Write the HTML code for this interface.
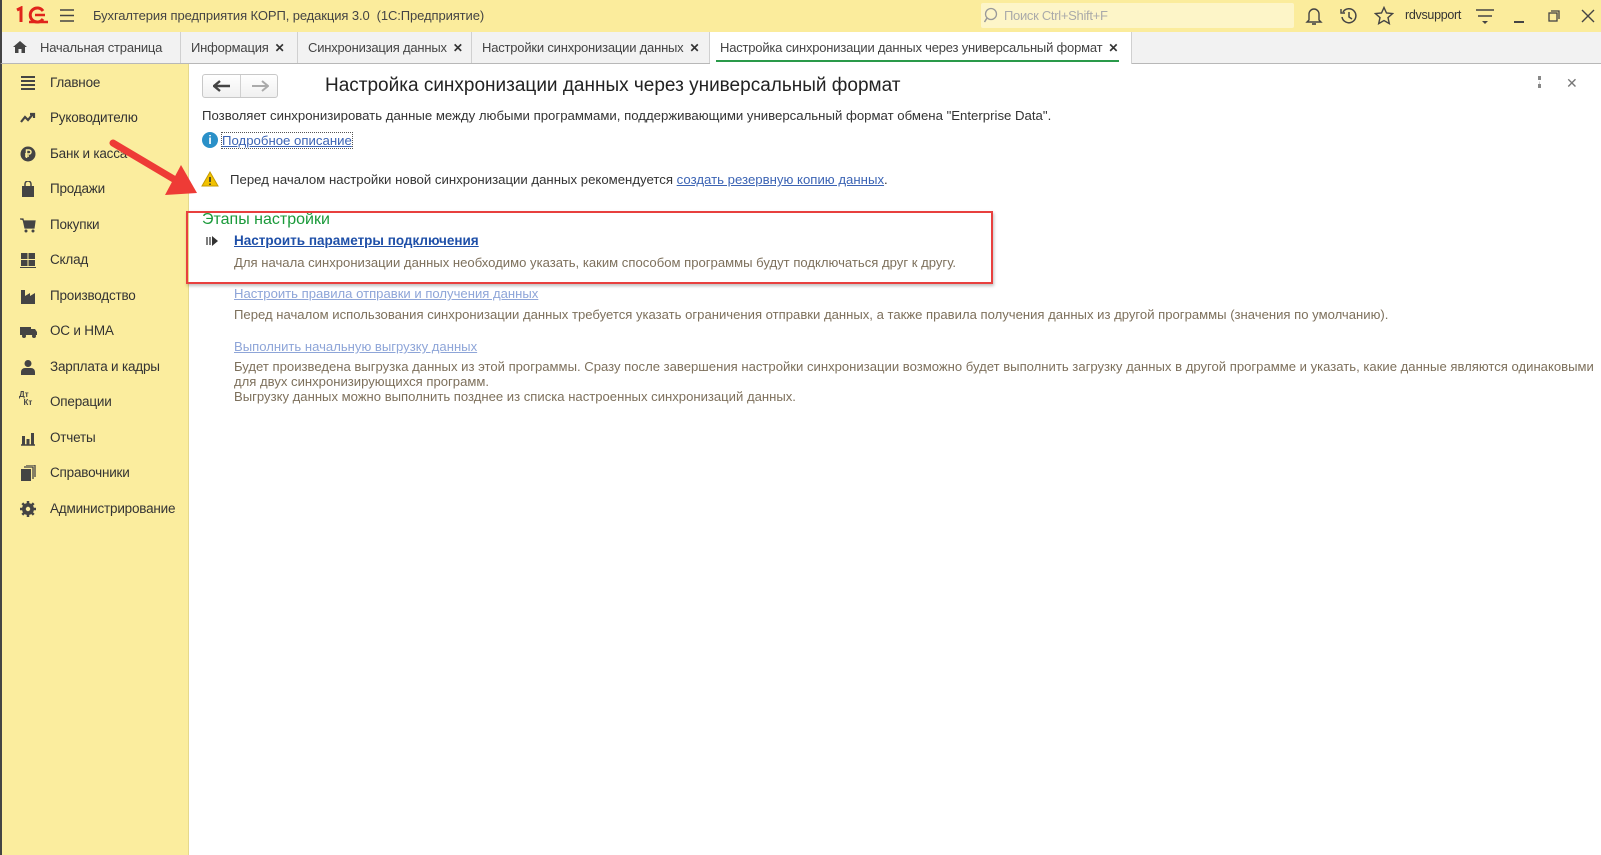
<!DOCTYPE html>
<html><head><meta charset="utf-8"><style>
*{margin:0;padding:0;box-sizing:border-box}
body{width:1601px;height:855px;overflow:hidden;background:#fff;font-family:"Liberation Sans",Arial,sans-serif;font-size:13px;color:#333;position:relative}
.abs{position:absolute;white-space:nowrap}
#top{position:absolute;left:0;top:0;width:1601px;height:32px;background:#fbec9c;border-left:2px solid #444}
#tabs{position:absolute;left:0;top:32px;width:1601px;height:32px;background:#f2f2f2;border-bottom:1px solid #b8b8b8;border-left:2px solid #444}
.tab{position:absolute;top:0;height:31px;line-height:31px;font-size:13px;color:#444;border-right:1px solid #d0d0d0;padding-left:10px;white-space:nowrap;overflow:hidden;letter-spacing:-0.2px}
.tab .x{font-size:12px;color:#333;margin-left:6px;font-weight:bold}
#side{position:absolute;left:0;top:64px;width:189px;height:791px;background:#fbed9e;border-right:1px solid #e6d98c;border-left:2px solid #444}
.si{position:absolute;left:48px;font-size:13.5px;color:#333;white-space:nowrap;letter-spacing:-0.2px}
.ic{position:absolute;left:18px;width:16px;height:16px}
.desc{color:#7d705c;font-size:13.1px}
.lnk{color:#3c64b4;text-decoration:underline}
.flnk{color:#8ea5d8;text-decoration:underline}
</style></head><body>
<div id="top">
 <svg class="abs" style="left:13px;top:6px" width="34" height="18" viewBox="0 0 34 18"><path d="M2 4 L6 2 V16" stroke="#e0241b" stroke-width="3" fill="none"/><path d="M28 5 A7 7 0 1 0 28 13" stroke="#e0241b" stroke-width="3" fill="none"/><path d="M14 16 H33" stroke="#e0241b" stroke-width="2.5"/><path d="M20 9 H30" stroke="#e0241b" stroke-width="2.5"/></svg>
 <svg class="abs" style="left:57px;top:8px" width="16" height="15"><path d="M1 2H15M1 7.5H15M1 13H15" stroke="#444" stroke-width="1.5"/></svg>
 <div class="abs" style="left:91px;top:8px;font-size:13px;color:#444;letter-spacing:-0.1px">Бухгалтерия предприятия КОРП, редакция 3.0 &nbsp;(1С:Предприятие)</div>
 <div class="abs" style="left:979px;top:3px;width:313px;height:25px;background:#fdf5c8;border-radius:2px"></div>
 <svg class="abs" style="left:982px;top:7px" width="16" height="17"><circle cx="7" cy="7" r="5.5" stroke="#999" stroke-width="1.3" fill="none"/><path d="M3 11 L0.5 15" stroke="#999" stroke-width="1.5"/></svg>
 <div class="abs" style="left:1002px;top:8px;font-size:13px;color:#aaa;letter-spacing:-0.3px">Поиск Ctrl+Shift+F</div>
 <svg class="abs" style="left:1303px;top:6px" width="18" height="20" viewBox="0 0 18 20"><path d="M4 14V8a5 5 0 0 1 10 0v6l2 2H2z" stroke="#444" stroke-width="1.4" fill="none"/><path d="M7 18h4" stroke="#444" stroke-width="1.6"/></svg>
 <svg class="abs" style="left:1337px;top:6px" width="20" height="20" viewBox="0 0 20 20"><path d="M4 6A7 7 0 1 1 3 11" stroke="#444" stroke-width="1.5" fill="none"/><path d="M2 3v4h4" stroke="#444" stroke-width="1.4" fill="none"/><path d="M10 6v5l3 2" stroke="#444" stroke-width="1.5" fill="none"/></svg>
 <svg class="abs" style="left:1372px;top:6px" width="20" height="19" viewBox="0 0 20 19"><path d="M10 1.5l2.5 5.5 6 .6-4.5 4 1.3 6L10 14.5 4.7 17.6 6 11.6 1.5 7.6l6-.6z" stroke="#444" stroke-width="1.4" fill="none"/></svg>
 <div class="abs" style="left:1403px;top:8px;font-size:12.5px;color:#333;letter-spacing:-0.3px">rdvsupport</div>
 <svg class="abs" style="left:1473px;top:8px" width="20" height="18"><path d="M1 2H19M3 8H17" stroke="#444" stroke-width="1.5"/><path d="M7 13H13L10 16z" fill="#444"/></svg>
 <div class="abs" style="left:1512px;top:21px;width:10px;height:1.5px;background:#444"></div>
 <svg class="abs" style="left:1546px;top:10px" width="12" height="12"><rect x="1" y="3" width="8" height="8" stroke="#444" stroke-width="1.3" fill="none"/><path d="M3 1H11V9" stroke="#444" stroke-width="1.3" fill="none"/></svg>
 <svg class="abs" style="left:1579px;top:9px" width="14" height="14"><path d="M1 1L13 13M13 1L1 13" stroke="#444" stroke-width="1.4"/></svg>
</div>
<div id="tabs">
 <div class="tab" style="left:0;width:179px;padding-left:10px"><span style="display:inline-block;width:16px;margin-right:12px"><svg width="16" height="14" style="vertical-align:-2px"><path d="M8 1L1 7H3V13H6.5V9H9.5V13H13V7H15z" fill="#444"/></svg></span>Начальная страница</div>
 <div class="tab" style="left:179px;width:117px">Информация<span class="x">✕</span></div>
 <div class="tab" style="left:296px;width:174px">Синхронизация данных<span class="x">✕</span></div>
 <div class="tab" style="left:470px;width:238px">Настройки синхронизации данных<span class="x">✕</span></div>
 <div class="tab" style="left:708px;width:422px;background:#fff;height:32px">Настройка синхронизации данных через универсальный формат<span class="x">✕</span><div style="position:absolute;left:6px;right:12px;bottom:2px;height:2px;background:#2a9a4a"></div></div>
</div>
<div id="side">
 <svg class="ic" style="top:11px" viewBox="0 0 16 16"><path d="M1 2H15M1 6H15M1 10H15M1 14H15" stroke="#444" stroke-width="2"/></svg><div class="si" style="top:11px">Главное</div>
 <svg class="ic" style="top:46px" viewBox="0 0 16 16"><path d="M1 12L5 7L8 10L13 4M10 4H14V8" stroke="#444" stroke-width="2.2" fill="none"/></svg><div class="si" style="top:46px">Руководителю</div>
 <svg class="ic" style="top:82px" viewBox="0 0 16 16"><circle cx="8" cy="8" r="7.5" fill="#444"/><path d="M6.5 12V4H9a2 2 0 0 1 0 4H5M5 10H9" stroke="#fbed9e" stroke-width="1.5" fill="none"/></svg><div class="si" style="top:82px">Банк и касса</div>
 <svg class="ic" style="top:117px" viewBox="0 0 16 16"><rect x="2" y="5" width="12" height="11" fill="#444"/><path d="M5 6V3a3 3 0 0 1 6 0V6" stroke="#444" stroke-width="1.5" fill="none"/></svg><div class="si" style="top:117px">Продажи</div>
 <svg class="ic" style="top:153px" viewBox="0 0 16 16"><path d="M0 2H3L5 11H14L15 4H4" fill="#444" stroke="#444" stroke-width="1.2"/><circle cx="6" cy="14" r="1.5" fill="#444"/><circle cx="13" cy="14" r="1.5" fill="#444"/></svg><div class="si" style="top:153px">Покупки</div>
 <svg class="ic" style="top:188px" viewBox="0 0 16 16"><rect x="1" y="1" width="6.5" height="6" fill="#444"/><rect x="8.5" y="1" width="6.5" height="6" fill="#444"/><rect x="1" y="8" width="6.5" height="6" fill="#444"/><rect x="8.5" y="8" width="6.5" height="6" fill="#444"/><rect x="0" y="15" width="16" height="1" fill="#444"/></svg><div class="si" style="top:188px">Склад</div>
 <svg class="ic" style="top:224px" viewBox="0 0 16 16"><path d="M1 16V2H5V8L10 5V8L15 5V16z" fill="#444"/></svg><div class="si" style="top:224px">Производство</div>
 <svg class="ic" style="top:259px;width:18px" viewBox="0 0 18 16"><rect x="0" y="4" width="11" height="8" fill="#444"/><path d="M11 6H15L17 9V12H11z" fill="#444"/><circle cx="4" cy="13" r="2" fill="#444"/><circle cx="14" cy="13" r="2" fill="#444"/></svg><div class="si" style="top:259px">ОС и НМА</div>
 <svg class="ic" style="top:295px" viewBox="0 0 16 16"><circle cx="8" cy="4.5" r="3.5" fill="#444"/><path d="M1 16V13a4 4 0 0 1 4-4H11a4 4 0 0 1 4 4V16z" fill="#444"/></svg><div class="si" style="top:295px">Зарплата и кадры</div>
 <div class="abs" style="left:17px;top:327px;font-size:8px;font-weight:bold;color:#444;line-height:8px">Дт<br>&nbsp;&nbsp;Кт</div><div class="si" style="top:330px">Операции</div>
 <svg class="ic" style="top:366px" viewBox="0 0 16 16"><path d="M1 15H15" stroke="#444" stroke-width="1.5"/><rect x="2" y="6" width="3" height="9" fill="#444"/><rect x="6.5" y="9" width="3" height="6" fill="#444"/><rect x="11" y="3" width="3" height="12" fill="#444"/></svg><div class="si" style="top:366px">Отчеты</div>
 <svg class="ic" style="top:401px" viewBox="0 0 16 16"><rect x="1" y="4" width="10" height="12" fill="#444"/><path d="M4 2H13V14M6 0H15V12" stroke="#444" stroke-width="1.3" fill="none"/></svg><div class="si" style="top:401px">Справочники</div>
 <svg class="ic" style="top:437px" viewBox="0 0 16 16"><circle cx="8" cy="8" r="4.5" stroke="#444" stroke-width="3" fill="none"/><path d="M8 0V16M0 8H16M2.3 2.3L13.7 13.7M13.7 2.3L2.3 13.7" stroke="#444" stroke-width="2.5"/><circle cx="8" cy="8" r="2.2" fill="#fbed9e"/></svg><div class="si" style="top:437px">Администрирование</div>
</div>
<!-- content -->
<div class="abs" style="left:202px;top:74px;width:76px;height:24px;border:1px solid #c8c8c8;border-radius:3px;background:linear-gradient(#fff,#f0f0f0)"><div style="position:absolute;left:37px;top:0;width:1px;height:22px;background:#d0d0d0"></div>
 <svg class="abs" style="left:10px;top:5px" width="18" height="12"><path d="M1 6H17M7 1L1 6L7 11" stroke="#444" stroke-width="2.4" fill="none"/></svg>
 <svg class="abs" style="left:48px;top:5px" width="18" height="12"><path d="M1 6H17M11 1L17 6L11 11" stroke="#aaa" stroke-width="2" fill="none"/></svg>
</div>
<div class="abs" style="left:325px;top:75px;font-size:19px;color:#222">Настройка синхронизации данных через универсальный формат</div>
<div class="abs" style="left:1538px;top:76px;width:3px;height:12px;border-left:3px dotted #888"></div>
<div class="abs" style="left:1566px;top:75px;font-size:14px;color:#777">✕</div>
<div class="abs" style="left:202px;top:108px;font-size:13.2px;color:#333">Позволяет синхронизировать данные между любыми программами, поддерживающими универсальный формат обмена "Enterprise Data".</div>
<div class="abs" style="left:202px;top:132px;width:16px;height:16px;border-radius:50%;background:#2a90c8;color:#fff;font-size:12px;font-weight:bold;text-align:center;line-height:16px">i</div>
<div class="abs lnk" style="left:222px;top:133px;font-size:13.2px;outline:1px dotted #555">Подробное описание</div>
<svg class="abs" style="left:201px;top:171px" width="18" height="16"><path d="M9 1L17 15H1z" fill="#f2c200" stroke="#c59a00"/><path d="M9 6V11M9 12.5V14" stroke="#333" stroke-width="1.6"/></svg>
<div class="abs" style="left:230px;top:172px;font-size:13.2px;color:#333">Перед началом настройки новой синхронизации данных рекомендуется <span class="lnk">создать резервную копию данных</span>.</div>
<div class="abs" style="left:202px;top:211px;font-size:16px;color:#1a9a3a">Этапы настройки</div>
<svg class="abs" style="left:206px;top:235px" width="14" height="12"><path d="M1 2V10M4 2V10" stroke="#555" stroke-width="1.5"/><path d="M6 1L12 6L6 11z" fill="#333"/></svg>
<div class="abs lnk" style="left:234px;top:233px;font-size:13.5px;font-weight:bold;color:#1e4fa8">Настроить параметры подключения</div>
<div class="abs desc" style="left:234px;top:255px">Для начала синхронизации данных необходимо указать, каким способом программы будут подключаться друг к другу.</div>
<div class="abs flnk" style="left:234px;top:286px;font-size:13.1px">Настроить правила отправки и получения данных</div>
<div class="abs desc" style="left:234px;top:307px">Перед началом использования синхронизации данных требуется указать ограничения отправки данных, а также правила получения данных из другой программы (значения по умолчанию).</div>
<div class="abs flnk" style="left:234px;top:339px;font-size:13.1px">Выполнить начальную выгрузку данных</div>
<div class="abs desc" style="left:234px;top:359px;line-height:15px">Будет произведена выгрузка данных из этой программы. Сразу после завершения настройки синхронизации возможно будет выполнить загрузку данных в другой программе и указать, какие данные являются одинаковыми<br>для двух синхронизирующихся программ.<br>Выгрузку данных можно выполнить позднее из списка настроенных синхронизаций данных.</div>
<div class="abs" style="left:186px;top:211px;width:807px;height:73px;border:2px solid #e8403e;box-shadow:1px 2px 3px rgba(0,0,0,.25)"></div>
<svg class="abs" style="left:105px;top:135px" width="100" height="65"><path d="M8 8L72 46" stroke="#ee3b36" stroke-width="7" stroke-linecap="round"/><path d="M60 60L92 58L76 30z" fill="#ee3b36"/></svg>
</body></html>
